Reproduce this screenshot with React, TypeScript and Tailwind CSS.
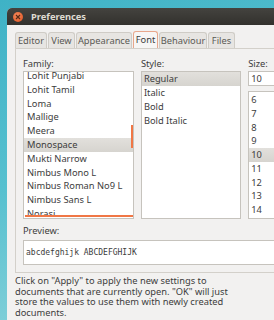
import React from "react";

const families = [
	"Lohit Punjabi",
	"Lohit Tamil",
	"Loma",
	"Mallige",
	"Meera",
	"Monospace",
	"Mukti Narrow",
	"Nimbus Mono L",
	"Nimbus Roman No9 L",
	"Nimbus Sans L",
	"Norasi",
];
const styles = ["Regular", "Italic", "Bold", "Bold Italic"];
const sizes = ["6", "7", "8", "9", "10", "11", "12", "13", "14"];
const tabs = [
	{ label: "Editor", w: "w-[32px]" },
	{ label: "View", w: "w-[27px]" },
	{ label: "Appearance", w: "w-[56px]" },
	{ label: "Font", w: "w-[25px]" },
	{ label: "Behaviour", w: "w-[48px]" },
	{ label: "Files", w: "w-[27px]" },
];

export default function App() {
	return (
		<div className="w-[274px] h-[320px] overflow-hidden bg-[linear-gradient(160deg,#3fb2c6_0%,#56c0cf_45%,#9ad8de_100%)] pt-[8px] pl-[7px] font-['Noto_Sans',sans-serif] text-[9.3px] text-[#3c3c3c]">
			<div className="w-[300px] h-[330px] rounded-tl-[5px] overflow-hidden bg-[#f2f1f0]">
				{/* title bar */}
				<div className="h-[17px] flex items-center gap-[8px] pl-[6px] bg-[linear-gradient(#44433f,#32312d)]">
					<div className="w-[10px] h-[10px] rounded-full bg-[radial-gradient(circle_at_40%_35%,#f58a5e,#dc4f1b)] flex items-center justify-center">
						<svg width="6" height="6" viewBox="0 0 6 6">
							<path d="M1 1L5 5M5 1L1 5" stroke="#5a2a16" strokeWidth="1.2" />
						</svg>
					</div>
					<span className="font-bold text-[9.3px] text-[#dfdbd2]">Preferences</span>
				</div>

				<div className="pl-[8px] pt-[7px]">
					{/* tabs */}
					<div className="flex items-end gap-[1px] h-[16px]">
						{tabs.map((t) =>
							t.label === "Font" ? (
								<div
									key={t.label}
									className={`${t.w} h-[17px] flex items-center justify-center bg-[#f7f6f5] border border-b-0 border-[#e8a78c] rounded-t-[3px] text-[#3c3c3c]`}
								>
									{t.label}
								</div>
							) : (
								<div
									key={t.label}
									className={`${t.w} h-[16px] flex items-center justify-center bg-[#e7e5e2] border border-b-0 border-[#cfccc6] rounded-t-[3px] text-[#5a5955]`}
								>
									{t.label}
								</div>
							)
						)}
					</div>

					{/* notebook panel */}
					<div className="h-[225px] border border-[#d3d0ca] bg-[#f2f1f0] pt-[8px] pl-[7px]">
						<div className="flex gap-[7px]">
							{/* family */}
							<div className="flex flex-col w-[115px]">
								<span className="h-[14px] leading-[14px]">Family:</span>
								<div className="relative h-[148px] border border-[#c6c3bd] bg-white overflow-hidden">
									<div className="-mt-[3px]">
										{families.map((f) => (
											<div
												key={f}
												className={`h-[13.8px] leading-[13.8px] pl-[3px] ${f === "Monospace" ? "bg-[linear-gradient(#e2e0dc,#d6d4cf)]" : ""}`}
											>
												{f}
											</div>
										))}
									</div>
									<div className="absolute right-[0px] top-[53px] w-[2px] h-[23px] bg-[#f07746]" />
									<div className="absolute left-[1px] bottom-[1px] w-[108px] h-[2px] bg-[#f07746]" />
								</div>
							</div>

							{/* style */}
							<div className="flex flex-col w-[104px]">
								<span className="h-[14px] leading-[14px]">Style:</span>
								<div className="h-[148px] border border-[#c6c3bd] bg-white">
									{styles.map((s) => (
										<div
											key={s}
											className={`h-[14px] leading-[14px] pl-[2px] ${s === "Regular" ? "bg-[linear-gradient(#e2e0dc,#d6d4cf)]" : ""}`}
										>
											{s}
										</div>
									))}
								</div>
							</div>

							{/* size */}
							<div className="flex flex-col w-[60px]">
								<span className="h-[14px] leading-[14px]">Size:</span>
								<div className="h-[15px] leading-[13px] border border-[#c6c3bd] bg-white pl-[2px]">10</div>
								<div className="mt-[5px] h-[128px] border border-[#c6c3bd] bg-white pt-[1px]">
									{sizes.map((s) => (
										<div
											key={s}
											className={`h-[13.75px] leading-[13.75px] pl-[2px] ${s === "10" ? "bg-[linear-gradient(#e2e0dc,#d6d4cf)]" : ""}`}
										>
											{s}
										</div>
									))}
								</div>
							</div>
						</div>

						{/* preview */}
						<div className="mt-[5px] h-[14px] leading-[14px]">Preview:</div>
						<div className="mt-[2px] h-[25px] border border-[#c6c3bd] bg-white flex items-center pl-[2px] font-['DejaVu_Sans_Mono',monospace] text-[8px]">
							abcdefghijk ABCDEFGHIJK
						</div>
					</div>

					{/* hint */}
					<p className="mt-[3px] w-[218px] leading-[10.5px]">
						Click on "Apply" to apply the new settings to documents that are currently open. "OK" will just store the values to use them with newly created documents.
					</p>
				</div>
			</div>
		</div>
	);
}
